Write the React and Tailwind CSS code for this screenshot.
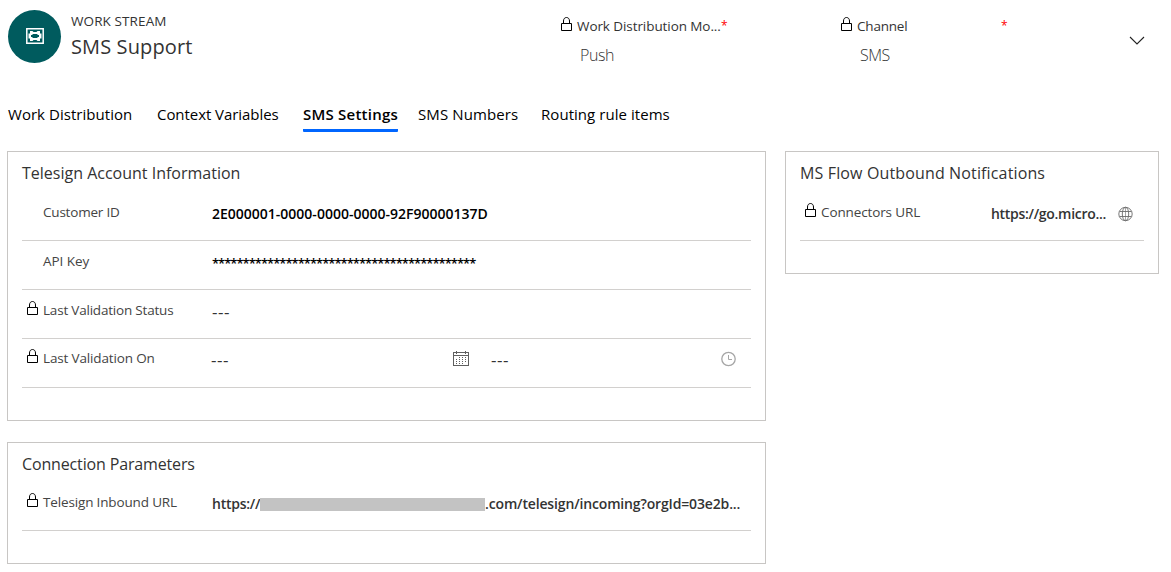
function Lock({ className = "" }) {
  return (
    <svg className={`mt-px block h-[15px] w-[12px] shrink-0 ${className}`} viewBox="0 0 12 15" fill="none" stroke="#000" aria-hidden="true">
      <path d="M.5 6.500h10v7H.5z" />
      <path d="M2.500 6.500V4C2.500 1.900 3.700.5 5.500.5S8.500 1.900 8.500 4v2.500" />
    </svg>
  );
}

function WorkStreamIcon() {
  return (
    <svg className="mb-px block h-[16px] w-[18px]" viewBox="0 0 18 16" aria-hidden="true">
      <path d="M.8.700h16.400v14.600H.8z" fill="none" stroke="#fff" strokeWidth="1.500" />
      <path
        fill="#fff"
        fillRule="evenodd"
        d="M4 3h2.500l1 1h3l1-1H14v2.500h1.500v5H14V13h-2.500l-1-1h-3l-1 1H4v-2.500H2.500v-5H4zM6.500 6v1H5v2h1.500v1h5V9H13V7h-1.500V6z"
      />
    </svg>
  );
}

function CalendarIcon() {
  return (
    <svg className="mt-px block h-[16px] w-[16px]" viewBox="0 0 16 16" fill="none" stroke="#5f5f5f" shapeRendering="crispEdges" aria-hidden="true">
      <path d="M.5 1.500h15v13H.5zM.5 4.500h15M3.500 0v3M12.500 0v3" />
      <path d="M6 6.500h7M3 8.500h10M3 10.500h10M3 12.500h7" strokeDasharray="1 2" />
    </svg>
  );
}

function ClockIcon() {
  return (
    <svg className="mt-px block h-[16px] w-[16px]" viewBox="0 0 16 16" fill="none" stroke="#a6a6a6" aria-hidden="true">
      <circle cx="7.500" cy="8" r="6.700" strokeWidth="1.300" />
      <path d="M7.500 4v4.500H11" />
    </svg>
  );
}

function GlobeIcon() {
  return (
    <svg className="mt-[2px] block h-[16px] w-[16px]" viewBox="0 0 16 16" fill="none" stroke="#6b6b6b" strokeWidth=".9" aria-hidden="true">
      <circle cx="7.500" cy="8" r="6.700" />
      <ellipse cx="7.500" cy="8" rx="3.200" ry="6.700" />
      <path d="M1.500 5.500h12M1.500 10.500h12" strokeWidth=".9" />
      <path d="M7.500 1.500v13" strokeWidth=".6" />
    </svg>
  );
}

function Row({ locked, label, labelClass = "tracking-[-0.2px]", padClass = "pt-[10px]", children }) {
  return (
    <div className={`flex h-[49px] border-b border-[#d2d0ce] pl-[5px] ${padClass}`}>
      <div className="flex w-[185px] shrink-0">
        <div className="w-[16px] shrink-0">{locked && <Lock />}</div>
        <div className={`text-[13.500px] leading-[20px] whitespace-nowrap text-[#444] ${labelClass}`}>{label}</div>
      </div>
      <div className="flex min-w-0 flex-1 pt-[2px] text-[14px] leading-[20px] whitespace-nowrap">{children}</div>
    </div>
  );
}

function Empty({ className = "" }) {
  return <span className={`text-[17px] tracking-[0.5px] text-[#333] ${className}`}>---</span>;
}

function Panel({ title, titleClass = "h-[40px]", className = "", children }) {
  return (
    <section className={`border border-[#c8c6c4] px-[14px] ${className}`}>
      <h2 className={`pt-[9px] text-[16px] leading-[24px] whitespace-nowrap text-[#333] ${titleClass}`}>{title}</h2>
      {children}
    </section>
  );
}

function HeaderField({ label, value, labelClass, valueClass }) {
  return (
    <div className="w-[280px] pt-[16px] whitespace-nowrap">
      <div className="flex h-[20px]">
        <Lock className="mr-[4px]" />
        <div className={`w-[144px] text-[13.500px] leading-[20px] text-[#333] ${labelClass}`}>{label}</div>
        <span className="text-[12px] leading-[19px] text-[#f00]">*</span>
      </div>
      <div className={`pt-[7px] pl-[19px] text-[16px] leading-[24px] font-light text-[#333] ${valueClass}`}>{value}</div>
    </div>
  );
}

export default function App() {
  return (
    <div className="h-[572px] w-[1171px] overflow-hidden bg-white font-['Open_Sans',sans-serif]">
      <header className="flex h-[98px]">
        <div className="mt-[10px] ml-[8px] flex h-[53px] w-[53px] items-center justify-center rounded-full bg-[#005b5e]">
          <WorkStreamIcon />
        </div>
        <div className="w-[500px] pt-[11px] pl-[10px] whitespace-nowrap text-[#333]">
          <div className="text-[13.500px] leading-[20px] tracking-[0.1px]">WORK STREAM</div>
          <h1 className="pt-px text-[20px] leading-[30px] tracking-[0.120px]">SMS Support</h1>
        </div>
        <HeaderField label="Work Distribution Mo..." value="Push" labelClass="tracking-[-0.080px]" valueClass="tracking-[-0.4px]" />
        <HeaderField label="Channel" value="SMS" labelClass="tracking-[-0.2px]" valueClass="tracking-[-0.5px]" />
        <svg className="mt-[36px] ml-[8px] h-[10px] w-[16px]" viewBox="0 0 16 10" fill="none" stroke="#222" strokeWidth="1.100" aria-hidden="true">
          <path d="M1 1l7 7 7-7" />
        </svg>
      </header>

      <nav className="flex h-[53px] pl-[8px] text-[15px] leading-[24px] whitespace-nowrap text-black">
        <div className="w-[149px] pt-[4px] tracking-[0.040px]">Work Distribution</div>
        <div className="w-[146px] pt-[4px] tracking-[-0.060px]">Context Variables</div>
        <div className="w-[115px] pt-[4px]">
          <div className="h-[30px] w-[95px] rounded-b-[1px] border-b-3 border-[#0066ff] font-semibold tracking-[0.220px]">SMS Settings</div>
        </div>
        <div className="w-[123px] pt-[4px] tracking-[0.1px]">SMS Numbers</div>
        <div className="pt-[4px] tracking-[0.050px]">Routing rule items</div>
      </nav>

      <main className="flex items-start gap-[19px] pl-[7px]">
        <div className="flex w-[759px] flex-col gap-[21px]">
          <Panel title="Telesign Account Information" titleClass="h-[40px] tracking-[0px]" className="h-[270px]">
            <Row label="Customer ID">
              <span className="font-semibold text-black">2E000001-0000-0000-0000-92F90000137D</span>
            </Row>
            <Row label="API Key" labelClass="tracking-[-0.050px]">
              <span className="text-[13px] font-semibold tracking-[-1px] text-black">*******************************************</span>
            </Row>
            <Row locked label="Last Validation Status">
              <Empty />
            </Row>
            <Row locked label="Last Validation On" labelClass="tracking-[-0.150px]" padClass="pt-[9px]">
              <Empty className="ml-[-1px] w-[242px]" />
              <CalendarIcon />
              <Empty className="ml-[22px] w-[230px]" />
              <ClockIcon />
            </Row>
          </Panel>
          <Panel title="Connection Parameters" titleClass="h-[39px] tracking-[-0.150px]" className="h-[122px]">
            <Row locked label="Telesign Inbound URL" labelClass="tracking-[-0.150px]">
              <span className="w-[48px] font-semibold tracking-[-0.250px] text-[#333]">https://</span>
              <span className="mt-[4px] h-[13px] w-[225px] bg-[#c3c3c3]" />
              <span className="font-semibold tracking-[-0.150px] text-[#333]">.com/telesign/incoming?orgId=03e2b...</span>
            </Row>
          </Panel>
        </div>
        <Panel title="MS Flow Outbound Notifications" titleClass="h-[40px] tracking-[0.140px]" className="h-[123px] w-[374px]">
          <Row locked label="Connectors URL" labelClass="tracking-[-0.120px]">
            <span className="w-[128px] pl-px font-semibold tracking-[-0.3px] text-[#333]">https://go.micro...</span>
            <GlobeIcon />
          </Row>
        </Panel>
      </main>
    </div>
  );
}
